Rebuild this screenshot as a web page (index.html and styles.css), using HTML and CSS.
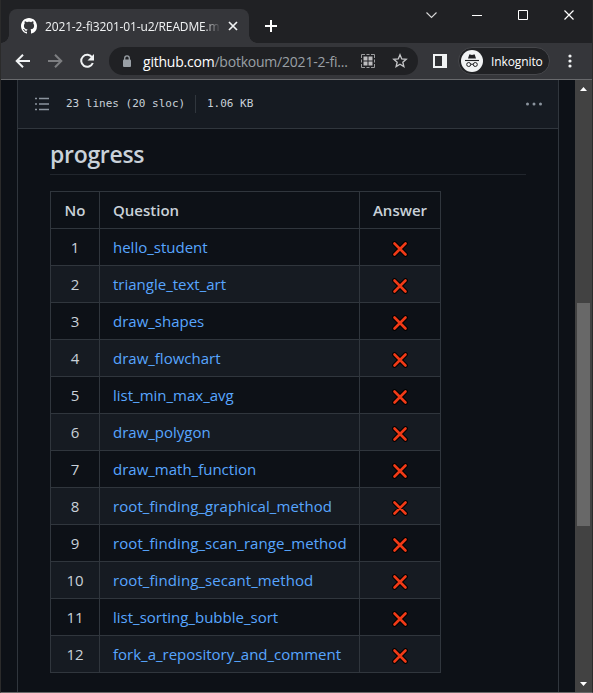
FILE: index.html
```html
<!DOCTYPE html>
<html lang="id">
<head>
<meta charset="utf-8">
<title>README.md</title>
<link rel="stylesheet" href="styles.css">
</head>
<body>
<div class="window">
  <header class="tabstrip">
    <div class="tab">
      <svg class="gh" width="16" height="16" viewBox="0 0 16 16"><path fill="#fff" d="M8 0C3.58 0 0 3.58 0 8c0 3.54 2.29 6.53 5.47 7.59.4.07.55-.17.55-.38 0-.19-.01-.82-.01-1.49-2.01.37-2.53-.49-2.69-.94-.09-.23-.48-.94-.82-1.13-.28-.15-.68-.52-.01-.53.63-.01 1.08.58 1.23.82.72 1.21 1.87.87 2.33.66.07-.52.28-.87.51-1.07-1.78-.2-3.64-.89-3.64-3.95 0-.87.31-1.59.82-2.15-.08-.2-.36-1.02.08-2.12 0 0 .67-.21 2.2.82.64-.18 1.32-.27 2-.27s1.36.09 2 .27c1.53-1.04 2.2-.82 2.2-.82.44 1.1.16 1.92.08 2.12.51.56.82 1.27.82 2.15 0 3.07-1.87 3.75-3.65 3.95.29.25.54.73.54 1.48 0 1.07-.01 1.93-.01 2.2 0 .21.15.46.55.38A8.01 8.01 0 0 0 16 8c0-4.42-3.58-8-8-8z"/></svg>
      <span class="tab-title">2021-2-fi3201-01-u2/README.md</span>
      <svg class="tab-close" width="10" height="10" viewBox="0 0 10 10"><path d="M1 1l8 8M9 1L1 9" stroke="#f1f3f4" stroke-width="1.7"/></svg>
    </div>
    <svg class="new-tab" width="12" height="12" viewBox="0 0 12 12"><path d="M6 0v12M0 6h12" stroke="#fff" stroke-width="2"/></svg>
    <div class="controls">
      <svg width="46" height="30" viewBox="0 0 46 30"><path d="M18.500 12.500l5 5 5-5" fill="none" stroke="#d8d8d8" stroke-width="1.100"/></svg>
      <svg width="46" height="30" viewBox="0 0 46 30"><path d="M18 15.500h10" stroke="#fff"/></svg>
      <svg width="46" height="30" viewBox="0 0 46 30"><path d="M18.500 10.500h9v9h-9z" fill="none" stroke="#fff"/></svg>
      <svg width="46" height="30" viewBox="0 0 46 30"><path d="M18.500 10.500l9 9M27.500 10.500l-9 9" stroke="#fff" stroke-width="1.200"/></svg>
    </div>
  </header>
  <nav class="toolbar">
    <svg class="nav-btn" width="16" height="16" viewBox="0 0 16 16"><path d="M15 8H2M8 1.700L1.700 8 8 14.300" fill="none" stroke="#f1f3f4" stroke-width="2"/></svg>
    <svg class="nav-btn" width="16" height="16" viewBox="0 0 16 16"><path d="M1 8h13M8 1.700L14.300 8 8 14.300" fill="none" stroke="#7d7e81" stroke-width="2"/></svg>
    <svg class="nav-btn reload" width="16" height="16" viewBox="0 0 16 16"><path d="M13.200 4.500A6 6 0 1 0 13.800 10" fill="none" stroke="#f1f3f4" stroke-width="2"/><path d="M15 1v6.500H8.500z" fill="#f1f3f4"/></svg>
    <div class="omnibox">
      <svg class="lock" width="10" height="13" viewBox="0 0 10 13"><rect x="1" y="4.500" width="8" height="7.500" rx="1" fill="#9aa0a6"/><path d="M2.700 5V3.200a2.300 2.300 0 0 1 4.600 0V5" fill="none" stroke="#9aa0a6" stroke-width="1.300"/></svg>
      <span class="url"><b>github.com</b>/botkoum/2021-2-fi...</span>
      <svg class="qr" width="14" height="14" viewBox="0 0 14 14"><path d="M.5 4V.5H4M5.500.5h3M10 .5h3.500V4M13.500 5.500v3M13.500 10v3.500H10M8.500 13.500h-3M4 13.500H.5V10M.5 8.500v-3" fill="none" stroke="#9a9b9d"/><path d="M2.500 2.500h4v4h-4zM7.500 2.500h4v4h-4zM2.500 7.500h4v4h-4zM7.500 7.500h4v4h-4z" fill="#bdbdbf"/></svg>
      <svg class="star" width="16" height="16" viewBox="0 0 16 16"><path d="M8 1.800l1.750 4.100 4.450.4-3.350 2.900 1 4.350L8 11.250l-3.850 2.300 1-4.350L1.800 6.300l4.450-.4z" fill="none" stroke="#c4c5c7" stroke-width="1.350"/></svg>
    </div>
    <svg class="side" width="14" height="14" viewBox="0 0 14 14"><path d="M0 0h14v14H0z" fill="#f1f3f4"/><path d="M2 2h7v10H2z" fill="#303134"/></svg>
    <div class="profile">
      <svg width="22" height="22" viewBox="0 0 22 22"><circle cx="11" cy="11" r="11" fill="#f1f3f4"/><path d="M7 8.500l1.200-3.700q.2-.6.900-.4l1.900.6 1.900-.6q.7-.2.900.4L15 8.500z" fill="#202124"/><path d="M4 10.500h14" stroke="#202124" stroke-width="1.100"/><circle cx="7.700" cy="14.500" r="2" fill="none" stroke="#202124"/><circle cx="14.300" cy="14.500" r="2" fill="none" stroke="#202124"/><path d="M9.700 14.500q1.300-.8 2.600 0" fill="none" stroke="#202124"/></svg>
      <span>Inkognito</span>
    </div>
    <svg class="menu" width="4" height="14" viewBox="0 0 4 14"><g fill="#f1f3f4"><circle cx="2" cy="2" r="1.600"/><circle cx="2" cy="7" r="1.600"/><circle cx="2" cy="12" r="1.600"/></g></svg>
  </nav>
  <div class="viewport">
    <main class="page">
      <section class="file">
        <div class="file-head">
          <svg width="16" height="16" viewBox="0 0 16 16"><path d="M1 2.500h2M1 8h2M1 13.500h2M5 2.500h10M5 8h10M5 13.500h10" stroke="#8b949e" stroke-width="1.300"/></svg>
          <span class="lines">23 lines (20 sloc)</span>
          <i class="divider"></i>
          <span class="size">1.06 KB</span>
          <svg class="more" width="18" height="4" viewBox="0 0 18 4"><g fill="#8b949e"><circle cx="2.500" cy="2" r="1.500"/><circle cx="9" cy="2" r="1.500"/><circle cx="15.500" cy="2" r="1.500"/></g></svg>
        </div>
        <article class="readme">
          <h2><span>progress</span></h2>
          <table>
            <colgroup><col class="c-no"><col class="c-q"><col class="c-a"></colgroup>
            <thead><tr><th>No</th><th class="q">Question</th><th>Answer</th></tr></thead>
            <tbody id="rows"></tbody>
          </table>
        </article>
      </section>
    </main>
    <aside class="scrollbar">
      <svg width="17" height="17" viewBox="0 0 17 17"><path d="M5 11h7L8.500 7z" fill="#fff"/></svg>
      <div class="thumb"></div>
      <svg class="down" width="17" height="17" viewBox="0 0 17 17"><path d="M5 7h7l-3.500 4z" fill="#fff"/></svg>
    </aside>
  </div>
</div>
<script src="script.js"></script>
</body>
</html>
```
FILE: styles.css
```css
* { box-sizing: border-box; }
body { margin: 0; background: #0d1117; font-family: "Open Sans", "Noto Sans", sans-serif; overflow: hidden; }
svg { display: block; flex: none; }
.window { width: 593px; height: 693px; display: flex; flex-direction: column; border: solid #2b2b2b; border-width: 0 1px 1px; border-bottom-color: #6a6a6a; }
.tabstrip { height: 43px; flex: none; background: #202124; display: flex; align-items: flex-start; padding-left: 8px; }
.tab { position: relative; width: 240px; height: 34px; margin-top: 9px; background: #35363a; border-radius: 8px 8px 0 0; display: flex; align-items: center; padding-left: 12px; }
.tab::before, .tab::after { content: ""; position: absolute; bottom: 0; width: 8px; height: 8px; }
.tab::before { left: -8px; background: radial-gradient(circle at 0 0, #202124 7.500px, #35363a 8px); }
.tab::after { right: -8px; background: radial-gradient(circle at 100% 0, #202124 7.500px, #35363a 8px); }
.tab-title { width: 175px; margin-left: 8px; overflow: hidden; white-space: nowrap; color: #f1f3f4; font-size: 12px; letter-spacing: -.15px; font-variant-ligatures: none; -webkit-mask-image: linear-gradient(90deg, #000 158px, transparent 176px); mask-image: linear-gradient(90deg, #000 158px, transparent 176px); }
.tab-close { margin-left: 8px; }
.new-tab { margin: 20px 0 0 16px; }
.controls { display: flex; margin-left: auto; }
.toolbar { height: 37px; flex: none; background: #35363a; border-bottom: 1px solid #68696c; display: flex; align-items: center; padding-left: 14px; }
.nav-btn { margin-right: 16px; }
.reload { margin-right: 14px; }
.omnibox { width: 309px; height: 28px; border-radius: 14px; background: #202124; display: flex; align-items: center; padding-left: 13px; }
.url { width: 211px; margin-left: 11px; white-space: nowrap; font-size: 14px; letter-spacing: -.22px; color: #9aa0a6; }
.url b { font-weight: 400; color: #fff; }
.qr { margin-left: 7px; }
.star { margin-left: 17px; }
.side { margin-left: 15px; }
.profile { width: 92px; height: 28px; margin-left: 11px; padding-left: 2px; border-radius: 14px; border: 1px solid #46474b; background: #202124; display: flex; align-items: center; color: #fff; font-size: 12px; letter-spacing: -.1px; }
.profile span { margin-left: 8px; }
.menu { margin-left: 18px; }
.viewport { flex: 1; min-height: 0; display: flex; }
.page { flex: 1; min-width: 0; padding: 0 16px; }
.file { height: 100%; border: solid #30363d; border-width: 0 1px; overflow: hidden; }
.file-head { height: 49px; background: #161b22; border-bottom: 1px solid #30363d; display: flex; align-items: center; padding: 0 15px 0 16px; font: 11px "DejaVu Sans Mono", monospace; color: #c9d1d9; white-space: nowrap; }
.lines, .size { padding-bottom: 2px; }
.lines { width: 120px; margin-left: 16px; }
.divider { width: 1px; height: 18px; margin: 0 11px 0 9px; background: #30363d; }
.more { margin-left: auto; }
.readme { padding: 0 32px; color: #c9d1d9; }
h2 { height: 46px; margin: 0 0 16px; padding-top: 10px; border-bottom: 1px solid #21262d; font-size: 23px; line-height: 30px; font-weight: 600; letter-spacing: -.3px; }
table { width: 391px; border-collapse: collapse; table-layout: fixed; font-size: 15px; line-height: 24px; }
.c-no { width: 49px; }
.c-q { width: 260px; }
.c-a { width: 81px; }
th, td { height: 37px; padding: 0; border: 1px solid #30363d; text-align: center; font-weight: 400; }
th { font-weight: 600; }
.q { text-align: left; padding-left: 13px; white-space: nowrap; }
tbody tr:nth-child(even) { background: #161b22; }
tbody tr:nth-child(n+8):nth-child(-n+10) a { letter-spacing: .08px; }
a { color: #58a6ff; text-decoration: none; }
td svg { margin: 3px auto 0; }
.scrollbar { width: 17px; flex: none; background: #424242; display: flex; flex-direction: column; }
.thumb { width: 13px; height: 223px; margin: 206px auto 0; background: #686868; }
.down { margin-top: auto; }
```
FILE: script.js
```js
const questions = [
  "hello_student", "triangle_text_art", "draw_shapes", "draw_flowchart",
  "list_min_max_avg", "draw_polygon", "draw_math_function",
  "root_finding_graphical_method", "root_finding_scan_range_method",
  "root_finding_secant_method", "list_sorting_bubble_sort",
  "fork_a_repository_and_comment"
];
const cross = '<svg width="16" height="16" viewBox="0 0 16 16"><g fill="none" stroke-linecap="round"><path d="M2.500 2.500l11 11M13.500 2.500l-11 11" stroke="#000" stroke-width="4.600"/><path d="M2.500 2.500l11 11M13.500 2.500l-11 11" stroke="#f03a17" stroke-width="2.600"/></g></svg>';
document.getElementById("rows").innerHTML = questions.map((name, i) =>
  `<tr><td>${i + 1}</td><td class="q"><a href="#">${name}</a></td><td>${cross}</td></tr>`
).join("");
```
